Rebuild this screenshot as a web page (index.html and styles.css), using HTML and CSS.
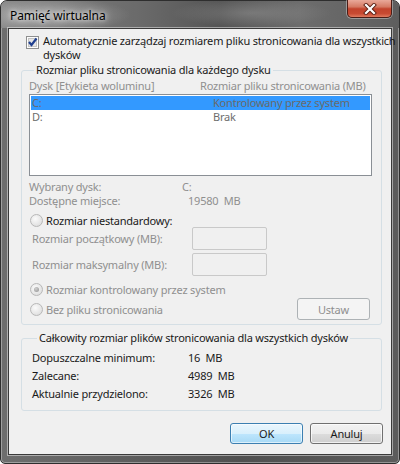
FILE: index.html
```html
<html>
    <head>
        <meta charset="utf-8">
        <title>Pamięć wirtualna</title>
        <link rel="stylesheet" href="styles.css">
    </head>
    <body>
        <div class="window">
            <div class="titlebar">
                <span class="title">Pamięć wirtualna</span>
                <div class="close-btn">
                    <svg width="14" height="12" viewBox="0 0 14 12">
                        <path d="M3 2 L11 10 M11 2 L3 10" stroke="#5b1f14" stroke-width="4" stroke-linecap="square"/>
                        <path d="M3 2 L11 10 M11 2 L3 10" stroke="#ffffff" stroke-width="2.2" stroke-linecap="square"/>
                    </svg>
                </div>
            </div>
            <div class="client">
                <div class="auto-row">
                    <span class="checkbox">
                        <svg width="13" height="13" viewBox="0 0 13 13">
                            <rect x="0.5" y="0.5" width="12" height="12" fill="#fdfdfd" stroke="#8e8f8f"/>
                            <rect x="2.5" y="2.5" width="8" height="8" fill="#e6e6e6" stroke="#c4c4c4"/>
                            <path d="M3 6 L5.5 9 L10.5 2.5" fill="none" stroke="#1f3f8f" stroke-width="2.2"/>
                        </svg>
                    </span>
                    <span class="auto-text">Automatycznie zarządzaj rozmiarem pliku stronicowania dla wszystkich<br>dysków</span>
                </div>

                <fieldset class="group group-drives">
                    <legend>Rozmiar pliku stronicowania dla każdego dysku</legend>
                    <div class="list-head disabled">
                        <span class="head-disk">Dysk [Etykieta woluminu]</span>
                        <span>Rozmiar pliku stronicowania (MB)</span>
                    </div>
                    <div class="listbox">
                        <div class="list-row selected">
                            <span class="col-disk">C:</span>
                            <span>Kontrolowany przez system</span>
                        </div>
                        <div class="list-row">
                            <span class="col-disk">D:</span>
                            <span>Brak</span>
                        </div>
                    </div>
                    <div class="info-row info-first disabled">
                        <span class="info-label">Wybrany dysk:</span>
                        <span>C:</span>
                    </div>
                    <div class="info-row disabled">
                        <span class="info-label">Dostępne miejsce:</span>
                        <span class="info-value">19580  MB</span>
                    </div>

                    <div class="radio-row custom-row">
                        <span class="radio"></span>
                        <span>Rozmiar niestandardowy:</span>
                    </div>
                    <div class="size-row disabled">
                        <span class="size-label">Rozmiar początkowy (MB):</span>
                        <span class="textbox"></span>
                    </div>
                    <div class="size-row disabled">
                        <span class="size-label">Rozmiar maksymalny (MB):</span>
                        <span class="textbox"></span>
                    </div>
                    <div class="radio-row system-row disabled">
                        <span class="radio checked"></span>
                        <span>Rozmiar kontrolowany przez system</span>
                    </div>
                    <div class="radio-row none-row disabled">
                        <span class="radio"></span>
                        <span class="none-label">Bez pliku stronicowania</span>
                        <button class="btn btn-disabled">Ustaw</button>
                    </div>
                </fieldset>

                <fieldset class="group group-total">
                    <legend>Całkowity rozmiar plików stronicowania dla wszystkich dysków</legend>
                    <div class="total-row">
                        <span class="total-label">Dopuszczalne minimum:</span>
                        <span class="total-value">16  MB</span>
                    </div>
                    <div class="total-row">
                        <span class="total-label">Zalecane:</span>
                        <span class="total-value">4989  MB</span>
                    </div>
                    <div class="total-row">
                        <span class="total-label">Aktualnie przydzielono:</span>
                        <span class="total-value">3326  MB</span>
                    </div>
                </fieldset>

                <div class="button-row">
                    <button class="btn btn-default">OK</button>
                    <button class="btn">Anuluj</button>
                </div>
            </div>
        </div>
    </body>
</html>
```

FILE: styles.css
```css
body{
    margin: 0;
    background: #ffffff;
    font-family: 'Noto Sans', 'Open Sans', sans-serif;
    font-size: 11px;
    letter-spacing: -0.2px;
    color: #1a1a1a;
}
.window{
    width: 400px;
    height: 464px;
    box-sizing: border-box;
    border: 1px solid #2e2e2e;
    border-radius: 7px 7px 5px 5px;
    background: linear-gradient(to right, #6e6e6e, #5a5a5a 40%, #505050 60%, #5c5c5c);
    padding: 0 7px 8px 7px;
    display: flex;
    flex-direction: column;
    box-shadow: inset 0 0 0 1px rgba(255,255,255,0.35);
}
.titlebar{
    height: 27px;
    display: flex;
    justify-content: space-between;
    align-items: flex-start;
    margin: 0 -7px;
    padding: 0 7px 0 9px;
    background:
        radial-gradient(ellipse 90px 18px at 40px 14px, rgba(200,200,200,0.55), rgba(200,200,200,0)),
        radial-gradient(ellipse 80px 14px at 250px 12px, rgba(170,170,170,0.35), rgba(170,170,170,0)),
        linear-gradient(to right, #858585, #6a6a6a 35%, #555555 55%, #6d6d6d 75%, #5e5e5e);
    border-radius: 6px 6px 0 0;
}
.title{
    margin-top: 6px;
    font-size: 12px;
    letter-spacing: -0.1px;
    color: #000000;
    text-shadow: 0 0 8px rgba(255,255,255,0.9), 0 0 4px rgba(255,255,255,0.8);
}
.close-btn{
    width: 45px;
    height: 18px;
    margin-top: -1px;
    box-sizing: border-box;
    border: 1px solid #4a1d16;
    border-top: none;
    border-radius: 0 0 5px 5px;
    background: linear-gradient(#e9a99a, #d57a64 40%, #c2432c 52%, #c84a32 80%, #e07a5e);
    box-shadow: 0 0 0 1px rgba(255,255,255,0.35);
    display: flex;
    align-items: center;
    justify-content: center;
}
.client{
    flex: 1;
    background: #f0f0f0;
    border: 1px solid #3a3a3a;
    box-shadow: 0 0 0 1px rgba(255,255,255,0.45);
    padding: 5px 0 0 0;
    display: flex;
    flex-direction: column;
}
.auto-row{
    display: flex;
    align-items: flex-start;
    padding-left: 17px;
    line-height: 14px;
}
.checkbox{
    width: 13px;
    height: 13px;
    margin-top: 2px;
    margin-right: 4px;
    flex: none;
}
.checkbox svg{
    display: block;
}
.auto-text{
    white-space: nowrap;
}
.disabled{
    color: #8f8f8f;
}
.group{
    margin: 1px 9px 0 12px;
    padding: 2px 9px 4px 7px;
    border: 1px solid #d5dfe5;
    border-radius: 3px;
    min-width: 0;
}
.group legend{
    margin-left: 5px;
    padding: 0 2px;
    line-height: 14px;
    color: #1a1a1a;
}
.list-head{
    display: flex;
    line-height: 14px;
}
.head-disk{
    width: 171px;
}
.listbox{
    margin-top: 1px;
    height: 82px;
    box-sizing: border-box;
    border: 1px solid #8a8f95;
    background: #ffffff;
    padding: 1px;
}
.list-row{
    display: flex;
    height: 14px;
    line-height: 14px;
    padding-left: 1px;
    color: #6d6d6d;
}
.list-row.selected{
    background: #3399ff;
    color: #6a6a6a;
}
.col-disk{
    width: 181px;
}
.info-row{
    display: flex;
    line-height: 14px;
}
.info-first{
    margin-top: 4px;
}
.info-label{
    width: 153px;
}
.info-value{
    margin-left: 6px;
    white-space: pre;
}
.radio-row{
    display: flex;
    align-items: center;
    height: 14px;
    padding-left: 1px;
}
.radio{
    width: 13px;
    height: 13px;
    box-sizing: border-box;
    border-radius: 50%;
    border: 1px solid #b8b8b8;
    background: radial-gradient(circle at 40% 35%, #fbfbfb, #e2e2e2 70%, #d6d6d6);
    margin-right: 3px;
    flex: none;
    display: flex;
    align-items: center;
    justify-content: center;
}
.radio.checked::after{
    content: "";
    width: 5px;
    height: 5px;
    border-radius: 50%;
    background: radial-gradient(circle at 40% 35%, #d0d0d0, #8f8f8f);
}
.custom-row{
    margin-top: 5px;
}
.size-row{
    display: flex;
    align-items: center;
    height: 23px;
    padding-left: 3px;
}
.size-row + .size-row{
    margin-top: 3px;
}
.size-label{
    width: 160px;
}
.textbox{
    width: 75px;
    height: 23px;
    box-sizing: border-box;
    border: 1px solid #c9c9c9;
    border-radius: 2px;
    background: #f0f0f0;
}
.system-row{
    margin-top: 6px;
}
.none-row{
    height: 22px;
    margin-top: 2px;
}
.none-label{
    flex: 1;
}
.btn{
    font-family: inherit;
    font-size: 11px;
    letter-spacing: -0.2px;
    width: 73px;
    height: 21px;
    padding: 0;
    border: 1px solid #707070;
    border-radius: 3px;
    background: linear-gradient(#f2f2f2 0%, #ebebeb 50%, #dddddd 51%, #cfcfcf 100%);
    box-shadow: inset 0 0 0 1px rgba(255,255,255,0.7);
    color: #1a1a1a;
}
.btn-disabled{
    width: 73px;
    height: 22px;
    margin-right: 2px;
    border-color: #adb2b5;
    background: #f4f4f4;
    box-shadow: none;
    color: #8f8f8f;
}
.btn-default{
    border-color: #3c7fb1;
    background: linear-gradient(#eaf6fd 0%, #d9f0fc 50%, #bee6fd 51%, #a7d9f5 100%);
    box-shadow: inset 0 0 0 1px rgba(255,255,255,0.6);
}
.group-total{
    margin-top: 6px;
    padding: 4px 9px 7px 10px;
}
.total-row{
    display: flex;
    height: 18px;
    line-height: 18px;
}
.total-label{
    width: 156px;
}
.total-value{
    white-space: pre;
}
.button-row{
    display: flex;
    justify-content: flex-end;
    gap: 7px;
    margin-top: 12px;
    padding-right: 8px;
}
```
